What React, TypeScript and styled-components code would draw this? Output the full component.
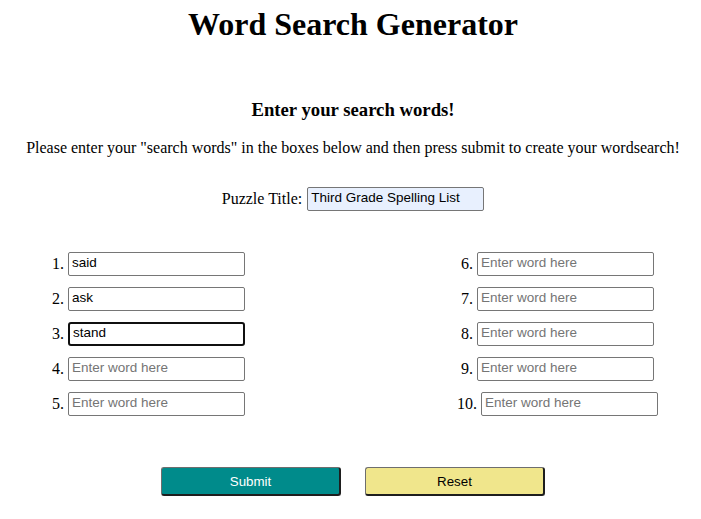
import React from "react";
import styled, { createGlobalStyle } from "styled-components";

const Global = createGlobalStyle`
  html, body { margin: 0; padding: 0; background: #ffffff; }
  body { font-family: "Liberation Serif", "Times New Roman", serif; color: #000; }
`;

const Page = styled.div`
  padding: 6px 3px 20px 8px;
  display: flex;
  flex-direction: column;
  align-items: center;
`;

const Title = styled.h1`
  margin: 0;
  font-size: 32px;
  line-height: 37px;
  font-weight: bold;
  text-align: center;
`;

const Subtitle = styled.h3`
  margin: 56px 0 0;
  font-size: 18.72px;
  line-height: 22px;
  font-weight: bold;
  text-align: center;
`;

const Intro = styled.p`
  margin: 18px 0 0;
  font-size: 16px;
  line-height: 18px;
  text-align: center;
`;

const TitleRow = styled.div`
  margin-top: 30px;
  display: flex;
  align-items: center;
  gap: 5px;
  font-size: 16px;
  line-height: 18px;
`;

const TextBox = styled.input<{ $filled?: boolean; $active?: boolean }>`
  box-sizing: border-box;
  width: 177px;
  height: 24px;
  padding: 0 2px 3px 3px;
  font-family: "Liberation Sans", Arial, sans-serif;
  font-size: 13.5px;
  color: #000;
  background: ${(p) => (p.$filled ? "#e8f0fe" : "#ffffff")};
  border: ${(p) => (p.$active ? "2px solid #101010" : "1px solid #767676")};
  border-radius: ${(p) => (p.$active ? "3px" : "2px")};
  outline: none;
  &::placeholder { color: #757575; }
`;

const WordGrid = styled.div`
  margin-top: 41px;
  display: grid;
  grid-template-columns: repeat(2, 280px);
  column-gap: 129px;
  grid-auto-flow: column;
  grid-template-rows: repeat(5, 24px);
  row-gap: 11px;
`;

const WordRow = styled.div`
  display: flex;
  justify-content: center;
  align-items: center;
  gap: 4px;
  font-size: 16px;
  line-height: 18px;
`;

const Label = styled.span`
  white-space: nowrap;
`;

const ButtonRow = styled.div`
  margin-top: 51px;
  display: flex;
  gap: 24px;
`;

const ActionButton = styled.button<{ $tone: "submit" | "reset" }>`
  box-sizing: border-box;
  width: 180px;
  height: 29px;
  font-family: "Liberation Sans", Arial, sans-serif;
  font-size: 13.33px;
  color: ${(p) => (p.$tone === "submit" ? "#ffffff" : "#000000")};
  background: ${(p) => (p.$tone === "submit" ? "#008b8b" : "#f0e68c")};
  border-style: solid;
  border-width: 1px 2px 2px 1px;
  border-color: #6e6e6e #1e1e1e #1e1e1e #6e6e6e;
  border-radius: 3px;
  cursor: pointer;
`;

const words = ["said", "ask", "stand", "", "", "", "", "", "", ""];

export default function App() {
  return (
    <>
      <Global />
      <Page>
        <Title>Word Search Generator</Title>
        <Subtitle>Enter your search words!</Subtitle>
        <Intro>
          Please enter your "search words" in the boxes below and then press submit to create your wordsearch!
        </Intro>
        <TitleRow>
          <Label>Puzzle Title:</Label>
          <TextBox $filled defaultValue="Third Grade Spelling List" />
        </TitleRow>
        <WordGrid>
          {words.map((w, i) => (
            <WordRow key={i}>
              <Label>{i + 1}.</Label>
              <TextBox
                defaultValue={w}
                placeholder="Enter word here"
                $active={i === 2}
                autoFocus={i === 2}
              />
            </WordRow>
          ))}
        </WordGrid>
        <ButtonRow>
          <ActionButton $tone="submit">Submit</ActionButton>
          <ActionButton $tone="reset">Reset</ActionButton>
        </ButtonRow>
      </Page>
    </>
  );
}
